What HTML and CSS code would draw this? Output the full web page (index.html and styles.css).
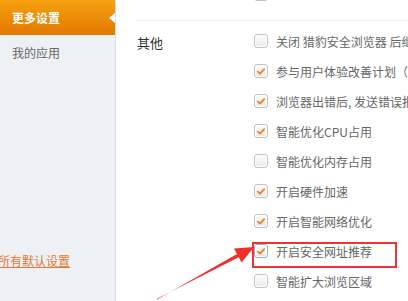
FILE: index.html
```html
<!DOCTYPE html>
<html lang="zh-CN">
<head>
    <meta charset="UTF-8">
    <meta name="viewport" content="width=device-width, initial-scale=1.0">
    <title>更多设置</title>
    <link rel="stylesheet" href="styles.css">
</head>
<body>

<div id="settings">
    <div id="sidebar">
        <ul class="nav">
            <li class="nav-item active">更多设置</li>
            <li class="nav-item">我的应用</li>
        </ul>
        <a class="reset-link" href="#">恢复所有默认设置</a>
    </div>

    <div id="main">
        <div class="section section-prev">
            <div class="section-label"></div>
            <ul class="options">
                <li class="option"><span class="box"></span><span class="text"></span></li>
            </ul>
        </div>

        <div class="section">
            <div class="section-label">其他</div>
            <ul class="options">
                <li class="option"><span class="box"></span><span class="text">关闭 猎豹安全浏览器 后继续运行后台程序</span></li>
                <li class="option"><span class="box checked"></span><span class="text">参与用户体验改善计划（ 了解详情 ）</span></li>
                <li class="option"><span class="box checked"></span><span class="text">浏览器出错后, 发送错误报告给猎豹</span></li>
                <li class="option"><span class="box checked"></span><span class="text">智能优化CPU占用</span></li>
                <li class="option"><span class="box"></span><span class="text">智能优化内存占用</span></li>
                <li class="option"><span class="box checked"></span><span class="text">开启硬件加速</span></li>
                <li class="option"><span class="box checked"></span><span class="text">开启智能网络优化</span></li>
                <li class="option"><span class="box checked focus"></span><span class="text">开启安全网址推荐</span></li>
                <li class="option"><span class="box"></span><span class="text">智能扩大浏览区域</span></li>
            </ul>
        </div>
    </div>
</div>

<!-- annotation drawn over the screenshot -->
<div class="highlight"></div>
<svg class="arrow" width="408" height="301" viewBox="0 0 408 301">
    <polygon points="156.6,299.8 157.4,298.4 240,256.5 236.6,254.2" fill="#ee2f2b"/>
    <polygon points="254,247 234,248.6 241.6,262.6" fill="#ee2f2b"/>
</svg>

<script>
    // draw the tick into every checked box
    document.querySelectorAll(".box.checked").forEach(function (box) {
        box.innerHTML = '<svg width="12" height="12" viewBox="0 0 12 12"><path d="M2.8 6.6 L5 8.6 L9.2 4.2" fill="none" stroke="#f07a1e" stroke-width="1.7" stroke-linecap="round" stroke-linejoin="round"/></svg>';
    });
</script>

</body>
</html>
```

FILE: styles.css
```css
body {
    margin: 0;
    padding: 0;
    font-family: "Noto Sans CJK SC", "Liberation Sans", sans-serif;
    background-color: #fff;
    overflow: hidden;
}

#settings {
    display: flex;
    height: 301px;
    overflow: hidden;
}

#sidebar {
    width: 115px;
    flex-shrink: 0;
    display: flex;
    flex-direction: column;
    background-color: #edf0f5;
    border-right: 1px solid #d9dde4;
    overflow: hidden;
}

.nav {
    list-style-type: none;
    margin: 0;
    padding: 0;
}

.nav-item {
    position: relative;
    height: 35px;
    line-height: 35px;
    padding-left: 12px;
    font-size: 12px;
    color: #666;
}

.nav-item.active {
    color: #fff;
    font-weight: bold;
    background: linear-gradient(#f6a10f, #e27800);
}

.nav-item.active::after {
    content: "";
    position: absolute;
    right: 0;
    top: 13px;
    border-top: 5px solid transparent;
    border-bottom: 5px solid transparent;
    border-right: 6px solid #fff;
}

.reset-link {
    margin-top: auto;
    margin-bottom: 30px;
    margin-left: -26px;
    line-height: 20px;
    font-size: 12px;
    color: #dc7a34;
    text-decoration: underline;
    white-space: nowrap;
}

#main {
    flex: 1;
    padding-left: 21px;
    overflow: hidden;
}

.section {
    display: flex;
    padding-top: 5px;
}

.section-prev {
    margin-top: -26px;
    padding-bottom: 11px;
    border-bottom: 1px solid #eee;
}

.section-label {
    width: 117px;
    flex-shrink: 0;
    line-height: 30px;
    padding-top: 2px;
    font-size: 13px;
    color: #333;
}

.options {
    list-style-type: none;
    margin: 0;
    padding: 0;
    flex: 1;
    min-width: 0;
}

.option {
    display: flex;
    align-items: center;
    height: 30px;
    white-space: nowrap;
}

.box {
    width: 12px;
    height: 12px;
    flex-shrink: 0;
    display: flex;
    align-items: center;
    justify-content: center;
    border: 1px solid #c2c2c2;
    border-radius: 3px;
    background: linear-gradient(#fdfdfd, #e9e9e9);
    box-shadow: inset 0 0 0 1px #fff;
}

.box.focus {
    border-color: #8fb3dc;
}

.text {
    margin-left: 8px;
    font-size: 12px;
    color: #666;
}

.highlight {
    position: absolute;
    left: 252px;
    top: 242px;
    width: 141px;
    height: 22px;
    border: 2px solid #ec3434;
}

.arrow {
    position: absolute;
    left: 0;
    top: 0;
    pointer-events: none;
}
```
